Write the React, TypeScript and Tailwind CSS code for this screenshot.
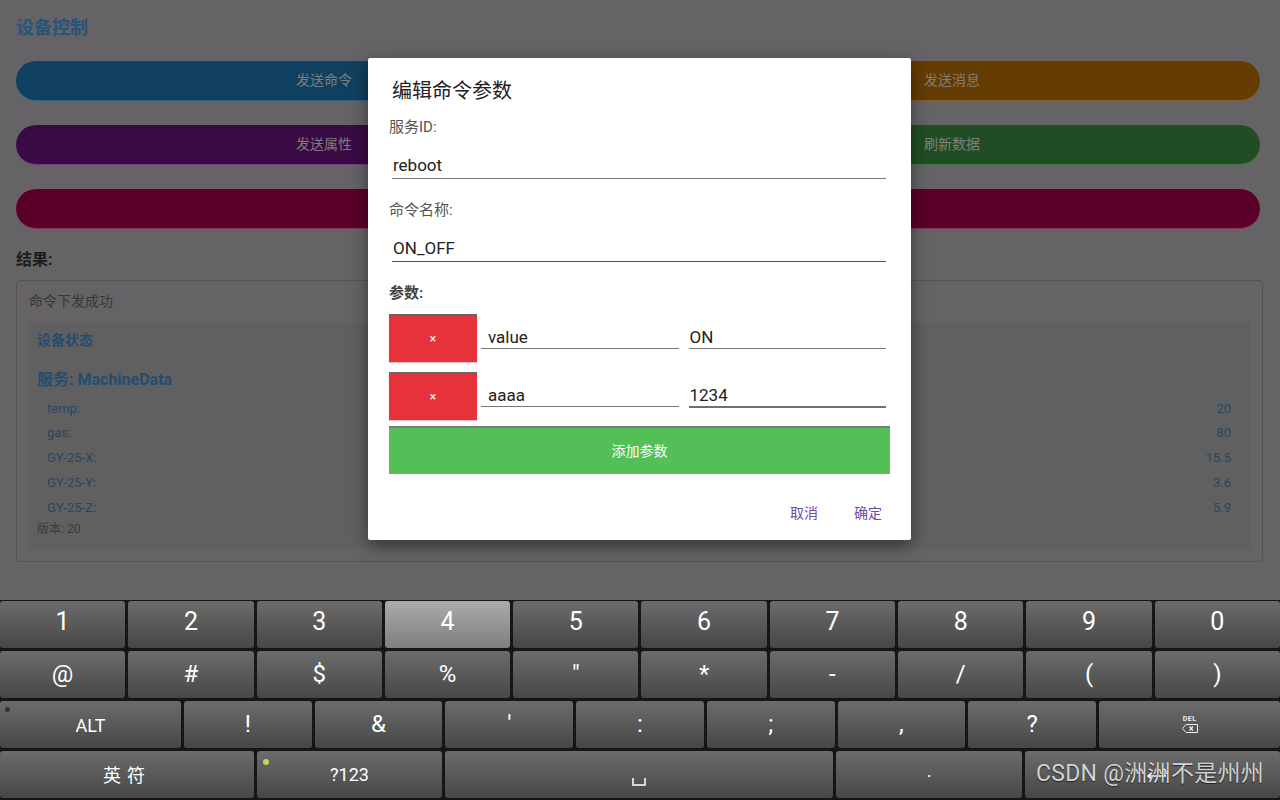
import React from 'react';

const font = "font-['Roboto','Noto_Sans_CJK_SC',sans-serif]";

const actionRows = [
  [
    { label: '发送命令', cls: 'bg-[#10405f] border-b-[#2a6690]' },
    { label: '发送消息', cls: 'bg-[#653c02] border-b-[#8c5a1c]' },
  ],
  [
    { label: '发送属性', cls: 'bg-[#3a0a45] border-b-[#7a3a88]' },
    { label: '刷新数据', cls: 'bg-[#214d24] border-b-[#3f7a42]' },
  ],
];

const readings = [
  { name: 'temp:', value: '20' },
  { name: 'gas:', value: '80' },
  { name: 'GY-25-X:', value: '15.5' },
  { name: 'GY-25-Y:', value: '3.6' },
  { name: 'GY-25-Z:', value: '5.9' },
];

function DimmedPage() {
  return (
    <div className="h-full px-4 pt-[15px]">
      <h1 className="text-[18px] leading-[26px] font-bold text-[#26547c]">设备控制</h1>

      <div className="mt-[20px] mr-[4px] flex flex-col gap-[24px]">
        {actionRows.map((row, i) => (
          <div key={i} className="grid grid-cols-2 gap-3">
            {row.map((b) => (
              <div
                key={b.label}
                className={`h-10 rounded-full border-b flex items-center justify-center text-[14px] text-[#807e7c] ${b.cls}`}
              >
                {b.label}
              </div>
            ))}
          </div>
        ))}
        <div className="h-10 rounded-full bg-[#5a0029] border-b border-b-[#93305d]" />
      </div>

      <div className="mt-[20px] text-[16px] leading-[22px] font-bold text-[#1c1c1c]">结果:</div>

      <div className="mt-[9px] mr-[1px] h-[282px] rounded border border-[#545254] px-3 pt-[10px]">
        <div className="text-[14px] leading-[20px] text-[#383838]">命令下发成功</div>
        <div className="mt-[11px] bg-[#606060] px-2 pt-2 pb-[11px]">
          <div className="text-[14px] leading-[20px] font-bold text-[#264c70]">设备状态</div>
          <div className="mt-[19px] text-[16px] leading-[22px] font-bold text-[#264c70]">服务: MachineData</div>
          <div className="mt-[5px] pl-[10px] pr-[11px]">
            {readings.map((r) => (
              <div key={r.name} className="h-[24.8px] flex items-center justify-between text-[13px] text-[#294661]">
                <span>{r.name}</span>
                <span>{r.value}</span>
              </div>
            ))}
          </div>
          <div className="text-[12px] leading-[18px] text-[#3a3a3a]">版本: 20</div>
        </div>
      </div>
    </div>
  );
}

function Field({ value, focused = false, pad = 'pl-[7px]' }: { value: string; focused?: boolean; pad?: string }) {
  return (
    <div
      className={`pt-[12px] text-[17px] leading-[22px] text-[#222] ${pad} ${
        focused ? 'border-b-2 border-[#6e6e7a]' : 'border-b border-[#777]'
      }`}
    >
      {value}
    </div>
  );
}

function ParamRow({ k, v, focused = false }: { k: string; v: string; focused?: boolean }) {
  return (
    <div className="flex items-start">
      <div className="w-[88px] h-[48px] bg-[#e5323b] border-t-2 border-[#666] shadow-[0_1px_1px_rgba(229,50,59,0.3)] flex items-center justify-center text-white text-[12px]">
        ×
      </div>
      <div className="flex-1 ml-[4px]">
        <Field value={k} />
      </div>
      <div className="flex-1 ml-[10px] mr-[4px]">
        <Field value={v} focused={focused} pad="pl-[1px]" />
      </div>
    </div>
  );
}

function Dialog() {
  return (
    <div className="absolute left-[368px] top-[58px] w-[543px] h-[482px] bg-white rounded-[2px] shadow-[0_6px_18px_rgba(0,0,0,0.45)] px-[21px] pt-[19px]">
      <div className="pl-[3px] text-[20px] leading-[28px] text-[#212121]">编辑命令参数</div>

      <div className="mt-[12px] text-[15px] leading-[20px] text-[#555]">服务ID:</div>
      <div className="ml-[3px] mr-[4px] pt-[16px] pb-[1px] pl-[1px] border-b border-[#7a7a7a] text-[17px] leading-[24px] text-[#222]">
        reboot
      </div>

      <div className="mt-[21px] text-[15px] leading-[20px] text-[#555]">命令名称:</div>
      <div className="ml-[3px] mr-[4px] pt-[16px] pb-[1px] pl-[1px] border-b border-[#555] text-[17px] leading-[24px] text-[#222]">
        ON_OFF
      </div>

      <div className="mt-[21px] text-[15px] leading-[20px] font-bold text-[#444]">参数:</div>

      <div className="mt-[11px] flex flex-col gap-[10px]">
        <ParamRow k="value" v="ON" />
        <ParamRow k="aaaa" v="1234" focused />
      </div>

      <div className="mt-[6px] h-[48px] bg-[#53bf56] border-t-2 border-[#7a7a7a] flex items-center justify-center text-white text-[14px]">
        添加参数
      </div>

      <div className="mt-[21px] h-[36px] flex items-center justify-end gap-[20px] text-[14px] text-[#6a4ea8]">
        <span className="px-2">取消</span>
        <span className="px-2">确定</span>
      </div>
    </div>
  );
}

function Key({
  children,
  className = '',
  active = false,
}: {
  children?: React.ReactNode;
  className?: string;
  active?: boolean;
}) {
  return (
    <div
      className={`relative h-[47px] rounded-[3px] flex items-center justify-center text-white ${
        active
          ? 'bg-gradient-to-b from-[#ababab] to-[#7f7f7f]'
          : 'bg-gradient-to-b from-[#6c6c6c] to-[#474747]'
      } ${className}`}
    >
      {children}
    </div>
  );
}

function DelIcon() {
  return (
    <div className="flex flex-col items-center leading-none">
      <span className="text-[7px] font-bold tracking-[0.5px] text-[#eee]">DEL</span>
      <svg width="16" height="9" viewBox="0 0 16 9" className="mt-[1px]">
        <path d="M4 0.5 H15.5 V8.5 H4 L0.5 4.5 Z" fill="none" stroke="#eee" strokeWidth="1" />
        <path d="M7.5 2.5 L11 6.5 M11 2.5 L7.5 6.5" stroke="#eee" strokeWidth="1.2" />
      </svg>
    </div>
  );
}

function SpaceIcon() {
  return (
    <svg width="14" height="8" viewBox="0 0 14 8" className="mt-[14px]">
      <path d="M1 0 V7 H13 V0" fill="none" stroke="#fff" strokeWidth="1.5" />
    </svg>
  );
}

function EnterArrow() {
  return (
    <svg width="22" height="14" viewBox="0 0 22 14" className="absolute left-[120px] top-[17px]">
      <path d="M20 1 V8 H4" fill="none" stroke="#fff" strokeWidth="1.6" />
      <path d="M7 4.5 L3 8 L7 11.5" fill="none" stroke="#fff" strokeWidth="1.6" />
    </svg>
  );
}

function Keyboard() {
  const nums = ['1', '2', '3', '4', '5', '6', '7', '8', '9', '0'];
  const syms = ['@', '#', '$', '%', '"', '*', '-', '/', '(', ')'];
  const mid = ['!', '&', "'", ':', ';', ',', '?'];
  return (
    <div className="h-[200px] bg-[#161616] pt-[1px] flex flex-col gap-[3px] font-['Roboto',sans-serif]">
      <div className="flex gap-[3px]">
        {nums.map((n) => (
          <Key key={n} active={n === '4'} className="flex-1 text-[25px] pb-[5px]">
            {n}
          </Key>
        ))}
      </div>
      <div className="flex gap-[3px]">
        {syms.map((s) => (
          <Key key={s} className="flex-1 text-[24px] pb-[2px]">
            {s}
          </Key>
        ))}
      </div>
      <div className="flex gap-[3px]">
        <Key className="w-[181px] shrink-0 text-[18px] pt-[1px]">
          <span className="absolute left-[5px] top-[6px] w-[5px] h-[5px] rounded-full bg-[#333]" />
          ALT
        </Key>
        {mid.map((s) => (
          <Key key={s} className="flex-1 text-[24px] pb-[2px]">
            {s}
          </Key>
        ))}
        <Key className="w-[181px] shrink-0">
          <DelIcon />
        </Key>
      </div>
      <div className="flex gap-[3px]">
        <Key className="w-[254px] shrink-0 text-[18px] tracking-[6px] font-['Noto_Sans_CJK_SC',sans-serif]">
          英符
        </Key>
        <Key className="w-[185px] shrink-0 text-[18px]">
          <span className="absolute left-[6px] top-[8px] w-[6px] h-[6px] rounded-full bg-[#b5e24a]" />
          ?123
        </Key>
        <Key className="flex-1">
          <SpaceIcon />
        </Key>
        <Key className="w-[186px] shrink-0 text-[18px] pt-[4px]">·</Key>
        <Key className="w-[255px] shrink-0 !justify-start pl-[11px]">
          <EnterArrow />
          <span className="relative text-[23px] tracking-[0.3px] text-[#d2d2d2] font-['Roboto','Noto_Sans_CJK_SC',sans-serif] [text-shadow:0_1px_1px_rgba(0,0,0,0.6)]">
            CSDN @洲洲不是州州
          </span>
        </Key>
      </div>
    </div>
  );
}

export default function App() {
  return (
    <div className={`w-[1280px] h-[800px] overflow-hidden flex flex-col ${font}`}>
      <div className="relative h-[600px] bg-[#656365]">
        <DimmedPage />
        <Dialog />
      </div>
      <Keyboard />
    </div>
  );
}
